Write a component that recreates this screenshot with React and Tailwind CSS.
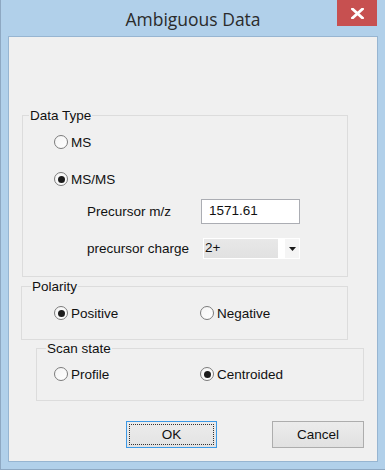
const font = { fontFamily: '"Liberation Sans", Arial, sans-serif' }

function Radio({ checked, label, className = '' }) {
  return (
    <div className={`flex h-[16px] items-center ${className}`}>
      <span className="grid h-[14px] w-[14px] shrink-0 place-items-center rounded-full border border-[#7c7c7c] bg-gradient-to-br from-[#f4f4f4] to-white">
        {checked ? <span className="h-[7px] w-[7px] rounded-full bg-[#1c1c1c]" /> : null}
      </span>
      <span className="ml-[3px] text-[13.5px] leading-[15px] text-[#111]">{label}</span>
    </div>
  )
}

function GroupBox({ title, titleLeft, className = '', children }) {
  return (
    <div className={`relative border border-[#dcdcdc] ${className}`}>
      <span
        className={`absolute top-[-8px] bg-[#f0f0f0] px-[1px] text-[13.5px] leading-[15px] text-[#111] ${titleLeft}`}
      >
        {title}
      </span>
      {children}
    </div>
  )
}

export default function App() {
  return (
    <div className="relative h-[470px] w-[385px] border-b border-l border-[#8ea8c2] bg-[#b1d0ea]" style={font}>
      <div className="relative flex h-[36px] items-start justify-center">
        <span
          className="mt-[8px] text-[17.5px] leading-[22px] text-[#2b2b2b]"
          style={{ fontFamily: '"Open Sans", "Noto Sans", sans-serif' }}
        >
          Ambiguous Data
        </span>
        <button
          type="button"
          className="absolute right-[8px] top-0 grid h-[26px] w-[40px] place-items-center bg-[#c75050]"
        >
          <svg width="13" height="11" viewBox="0 0 13 11" aria-hidden="true">
            <path d="M1.5 1 L11.5 10 M11.5 1 L1.5 10" stroke="#fff" strokeWidth="2.8" strokeLinecap="square" />
          </svg>
        </button>
      </div>

      <div className="ml-[7px] flex h-[426px] w-[370px] flex-col border border-[#97b5d1] bg-[#f0f0f0]">
        <GroupBox title="Data Type" titleLeft="left-[6px]" className="ml-[13px] mt-[78px] h-[162px] w-[326px]">
          <div className="flex flex-col pl-[31px] pt-[18px]">
            <Radio label="MS" />
            <Radio checked label="MS/MS" className="mt-[21px]" />
            <div className="mt-[12px] flex h-[25px] items-center pl-[33px]">
              <span className="w-[114px] text-[13.5px] leading-[15px] text-[#111]">Precursor m/z</span>
              <div className="flex h-[25px] w-[99px] items-center border border-[#abadb3] bg-white pl-[7px] text-[13.5px] text-[#111]">
                1571.61
              </div>
            </div>
            <div className="mt-[14px] flex h-[21px] items-center pl-[33px]">
              <span className="w-[116px] text-[13.5px] leading-[15px] text-[#111]">precursor charge</span>
              <div className="flex h-[21px] w-[97px] border border-white bg-white">
                <div className="flex w-[74px] items-center bg-gradient-to-b from-[#e8e8e8] to-[#e1e1e1] pl-[1px] text-[13.5px] text-[#111]">
                  2+
                </div>
                <div className="ml-[7px] flex flex-1 items-center justify-center bg-[#f5f5f5]">
                  <svg width="7" height="4" viewBox="0 0 7 4" aria-hidden="true">
                    <path d="M0 0 H7 L3.5 4 Z" fill="#1a1a1a" />
                  </svg>
                </div>
              </div>
            </div>
          </div>
        </GroupBox>

        <GroupBox title="Polarity" titleLeft="left-[9px]" className="ml-[12px] mt-[9px] h-[54px] w-[327px]">
          <div className="flex pl-[32px] pt-[18px]">
            <Radio checked label="Positive" className="w-[146px]" />
            <Radio label="Negative" />
          </div>
        </GroupBox>

        <GroupBox title="Scan state" titleLeft="left-[9px]" className="ml-[27px] mt-[8px] h-[53px] w-[328px]">
          <div className="flex pl-[17px] pt-[17px]">
            <Radio label="Profile" className="w-[146px]" />
            <Radio checked label="Centroided" />
          </div>
        </GroupBox>

        <div className="mt-[20px] flex">
          <button
            type="button"
            className="ml-[117px] h-[27px] w-[91px] border border-[#3c99e6] bg-gradient-to-b from-[#ececec] to-[#e3e3e3] p-[2px]"
          >
            <span className="flex h-full w-full items-center justify-center border border-dotted border-[#333] text-[13.5px] leading-[15px] text-[#111]">
              OK
            </span>
          </button>
          <button
            type="button"
            className="ml-[55px] flex h-[27px] w-[92px] items-center justify-center border border-[#adadad] bg-gradient-to-b from-[#ececec] to-[#e1e1e1] text-[13.5px] leading-[15px] text-[#111]"
          >
            Cancel
          </button>
        </div>
      </div>
    </div>
  )
}
